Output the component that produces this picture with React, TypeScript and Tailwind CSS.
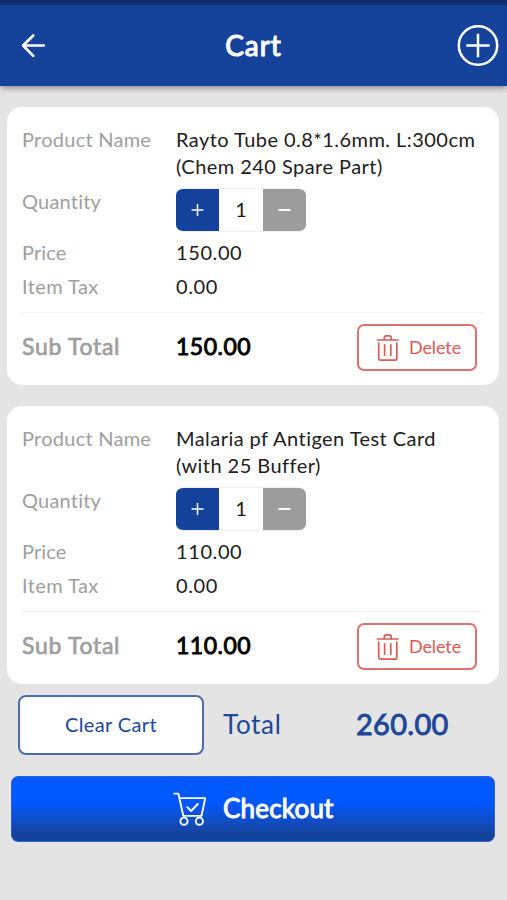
import React, { useState } from "react";

interface CartItem {
  id: number;
  name: string[];
  price: number;
  tax: number;
  quantity: number;
}

const initialItems: CartItem[] = [
  {
    id: 1,
    name: ["Rayto Tube 0.8*1.6mm. L:300cm", "(Chem 240 Spare Part)"],
    price: 150,
    tax: 0,
    quantity: 1,
  },
  {
    id: 2,
    name: ["Malaria pf Antigen Test Card", "(with 25 Buffer)"],
    price: 110,
    tax: 0,
    quantity: 1,
  },
];

const BackIcon = () => (
  <svg width="26" height="26" viewBox="0 0 26 26" fill="none" stroke="currentColor" strokeWidth="2.6" strokeLinecap="round" strokeLinejoin="round">
    <path d="M23.8 12.5H3M13.3 2.5L3 12.5l10.3 10.3" />
  </svg>
);

const AddIcon = () => (
  <svg width="42" height="42" viewBox="0 0 42 42" fill="none" stroke="currentColor" strokeWidth="2.5">
    <circle cx="21" cy="20.5" r="19.2" />
    <path d="M21 8.8v23.4M9.3 20.5h23.4" />
  </svg>
);

const TrashIcon = () => (
  <svg width="24" height="28" viewBox="0 0 24 28" fill="none" stroke="currentColor" strokeWidth="1.7" strokeLinecap="round" strokeLinejoin="round">
    <path d="M1.5 6h20.5M8.3 5.8V3.6a1.8 1.8 0 0 1 1.8-1.8h3.3a1.8 1.8 0 0 1 1.8 1.8v2.2" />
    <path d="M2.7 9v15.2a2 2 0 0 0 2 2h14.1a2 2 0 0 0 2-2V9M8.6 10.8v10.4M14.8 10.8v10.4" />
  </svg>
);

const CartIcon = () => (
  <svg width="34" height="34" viewBox="0 0 34 34" fill="none" stroke="currentColor" strokeWidth="1.9" strokeLinecap="round" strokeLinejoin="round">
    <path d="M1.2 1.6h4.2l4.9 22.3h18.2l3.7-17.8H6.6" />
    <path d="M14.3 15.2l3.8 3.8 6.7-7" />
    <circle cx="11" cy="29.2" r="3.6" />
    <circle cx="26.4" cy="29.2" r="3.6" />
  </svg>
);

interface CardProps {
  item: CartItem;
  onQuantity: (id: number, delta: number) => void;
  onDelete: (id: number) => void;
}

const CartCard: React.FC<CardProps> = ({ item, onQuantity, onDelete }) => (
  <div className="h-[278px] rounded-[15px] bg-white px-[14px] pt-[19px] text-[20px] text-[#202020]">
    <div className="flex h-[55px] pl-[1px] leading-[27px]">
      <span className="w-[154px] tracking-[0.25px] text-[#9e9e9e]">Product Name</span>
      <div className="whitespace-nowrap tracking-[0.45px]">
        {item.name.map((line) => (
          <div key={line}>{line}</div>
        ))}
      </div>
    </div>

    <div className="mt-[7px] flex h-[44px] pl-[1px]">
      <span className="w-[154px] leading-[26px] tracking-[0.2px] text-[#9e9e9e]">Quantity</span>
      <div className="flex h-[44px] w-[130px] overflow-hidden rounded-[7px] border-y border-[#f0f0f0] bg-white">
        <button onClick={() => onQuantity(item.id, 1)} className="-my-px flex w-[43px] items-center justify-center bg-[#15439b] text-white">
          <svg width="14" height="14" viewBox="0 0 14 14" stroke="currentColor" strokeWidth="1.5">
            <path d="M6.5 1v12M0.5 7h12" />
          </svg>
        </button>
        <span className="flex flex-1 items-center justify-center pb-[2px]">{item.quantity}</span>
        <button onClick={() => onQuantity(item.id, -1)} className="-my-px flex w-[43px] items-center justify-center bg-[#9c9c9c] text-white">
          <svg width="14" height="14" viewBox="0 0 14 14" stroke="currentColor" strokeWidth="1.8">
            <path d="M0.5 7h12" />
          </svg>
        </button>
      </div>
    </div>

    <div className="mt-[2px] flex h-[35px] items-center pl-[1px]">
      <span className="w-[154px] tracking-[0.1px] text-[#9e9e9e]">Price</span>
      <span className="tracking-[0.6px]">{item.price.toFixed(2)}</span>
    </div>
    <div className="flex h-[35px] items-center pb-[1px] pl-[1px]">
      <span className="w-[154px] tracking-[0.4px] text-[#9e9e9e]">Item Tax</span>
      <span className="tracking-[0.6px]">{item.tax.toFixed(2)}</span>
    </div>

    <div className="mt-[8px] flex items-center border-t border-[#f2f2f2] pt-[11px] pl-[1px]">
      <span className="w-[154px] pb-[2px] text-[23px] tracking-[0.7px] text-[#9e9e9e] [-webkit-text-stroke:0.7px]">Sub Total</span>
      <span className="pb-[2px] text-[23px] tracking-[0.5px] text-black [-webkit-text-stroke:0.9px]">
        {(item.price * item.quantity + item.tax).toFixed(2)}
      </span>
      <button
        onClick={() => onDelete(item.id)}
        className="mr-[8px] ml-auto flex h-[47px] w-[120px] items-center rounded-[7px] border-2 border-[#e0706b] pl-[17px] text-[18px] text-[#dc5a54]"
      >
        <TrashIcon />
        <span className="ml-[9px] tracking-[-0.1px]">Delete</span>
      </button>
    </div>
  </div>
);

export default function App() {
  const [items, setItems] = useState<CartItem[]>(initialItems);

  const changeQuantity = (id: number, delta: number) => {
    setItems(items.map((i) => (i.id === id ? { ...i, quantity: Math.max(1, i.quantity + delta) } : i)));
  };

  const deleteItem = (id: number) => {
    setItems(items.filter((i) => i.id !== id));
  };

  const total = items.reduce((sum, i) => sum + i.price * i.quantity + i.tax, 0);

  return (
    <div className="flex h-[900px] w-[507px] flex-col overflow-hidden bg-[#e4e4e4] font-['Lato','Open_Sans',sans-serif]">
      <header className="grid h-[86px] shrink-0 grid-cols-3 items-center border-t-[5px] border-[#12306f] bg-[#15439b] pr-[8px] pl-[20px] text-white shadow-[0_1px_7px_rgba(0,0,0,0.5)]">
        <button className="justify-self-start">
          <BackIcon />
        </button>
        <h1 className="pr-[12px] pb-[2px] text-center text-[28px] tracking-[0.9px] [-webkit-text-stroke:1.1px]">Cart</h1>
        <button className="justify-self-end">
          <AddIcon />
        </button>
      </header>

      {/* Cart items */}
      <main className="mt-[21px] flex flex-col gap-[21px] pr-[8px] pl-[7px]">
        {items.map((item) => (
          <CartCard key={item.id} item={item} onQuantity={changeQuantity} onDelete={deleteItem} />
        ))}
      </main>

      {/* Totals */}
      <div className="mt-[11px] flex h-[60px] items-center pl-[18px] text-[#1d479a]">
        <button
          onClick={() => setItems([])}
          className="h-[60px] w-[186px] rounded-[8px] border-2 border-[#4a6dae] bg-white pb-[2px] text-[20px] tracking-[0.35px]"
        >
          Clear Cart
        </button>
        <span className="ml-[19px] w-[133px] pb-[2px] text-[26px] tracking-[0.7px]">Total</span>
        <span className="pb-[2px] text-[29px] tracking-[0.3px] [-webkit-text-stroke:0.9px]">{total.toFixed(2)}</span>
      </div>

      <button className="mt-[21px] mr-[12px] ml-[11px] flex h-[66px] items-center rounded-[7px] border border-[#2b62cf] bg-linear-to-b from-[#0058ff] from-40% to-[#15439b] to-90% pl-[161px] text-white">
        <CartIcon />
        <span className="ml-[16px] pb-[2px] text-[26px] tracking-[0.2px] [-webkit-text-stroke:1px]">Checkout</span>
      </button>
    </div>
  );
}
